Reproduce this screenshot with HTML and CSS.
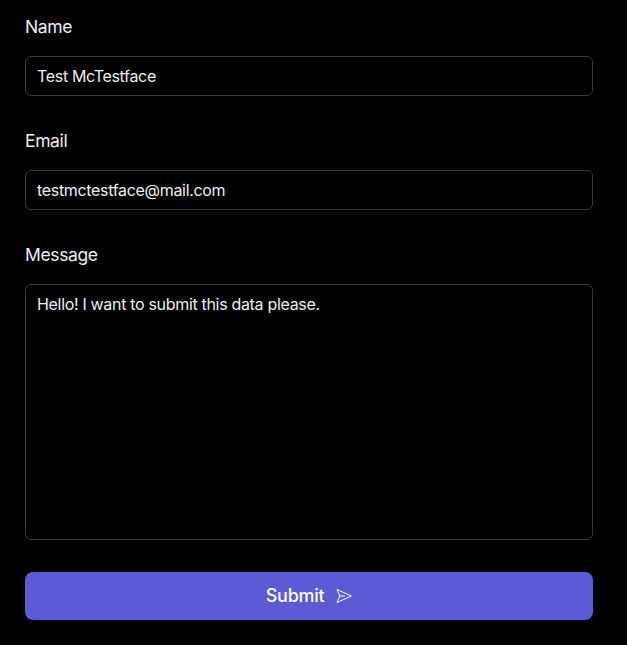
FILE: index.html
```html
<!DOCTYPE html>
<html lang="en">
<head>
<meta charset="utf-8">
<title>Contact</title>
<link rel="stylesheet" href="styles.css">
</head>
<body>
<form class="form">
  <div class="field">
    <label class="label" for="name">Name</label>
    <input class="control" id="name" type="text" value="Test McTestface">
  </div>
  <div class="field">
    <label class="label" for="email">Email</label>
    <input class="control" id="email" type="email" value="testmctestface@mail.com">
  </div>
  <div class="field">
    <label class="label" for="message">Message</label>
    <textarea class="control control-area" id="message">Hello! I want to submit this data please.</textarea>
  </div>
  <button class="submit" type="button">
    <span>Submit</span>
    <svg class="icon" viewBox="0 0 16 16" fill="none" stroke="currentColor" stroke-width="1" stroke-linejoin="round"><path d="M1 1.5 15.3 8 1 14.5 3.8 8ZM3.8 8H8.8"/></svg>
  </button>
</form>
</body>
</html>
```
FILE: styles.css
```css
body {
  margin: 0;
  background: #000;
  color: #edeef0;
  font-family: Inter, sans-serif;
}
.form {
  padding: 14px 34px 25px 25px;
  display: flex;
  flex-direction: column;
  gap: 32px;
}
.field {
  display: flex;
  flex-direction: column;
  gap: 15px;
}
.label {
  height: 27px;
  line-height: 26px;
  font-size: 17.5px;
  letter-spacing: -0.37px;
}
.control {
  box-sizing: border-box;
  width: 100%;
  height: 40px;
  margin: 0;
  padding: 7px 11px;
  border: 1px solid #363a3f;
  border-radius: 6px;
  outline: 0;
  background: transparent;
  color: inherit;
  font: 400 16px/24px Inter, sans-serif;
  letter-spacing: -0.32px;
}
.control-area {
  display: block;
  height: 256px;
  resize: none;
}
.submit {
  height: 48px;
  padding: 0;
  border: 0;
  border-radius: 8px;
  background: #5b5bd6;
  color: #fff;
  font: 500 18px/26px Inter, sans-serif;
  letter-spacing: -0.3px;
  display: flex;
  align-items: center;
  justify-content: center;
  gap: 12px;
}
.icon {
  width: 16px;
  height: 16px;
}
```
